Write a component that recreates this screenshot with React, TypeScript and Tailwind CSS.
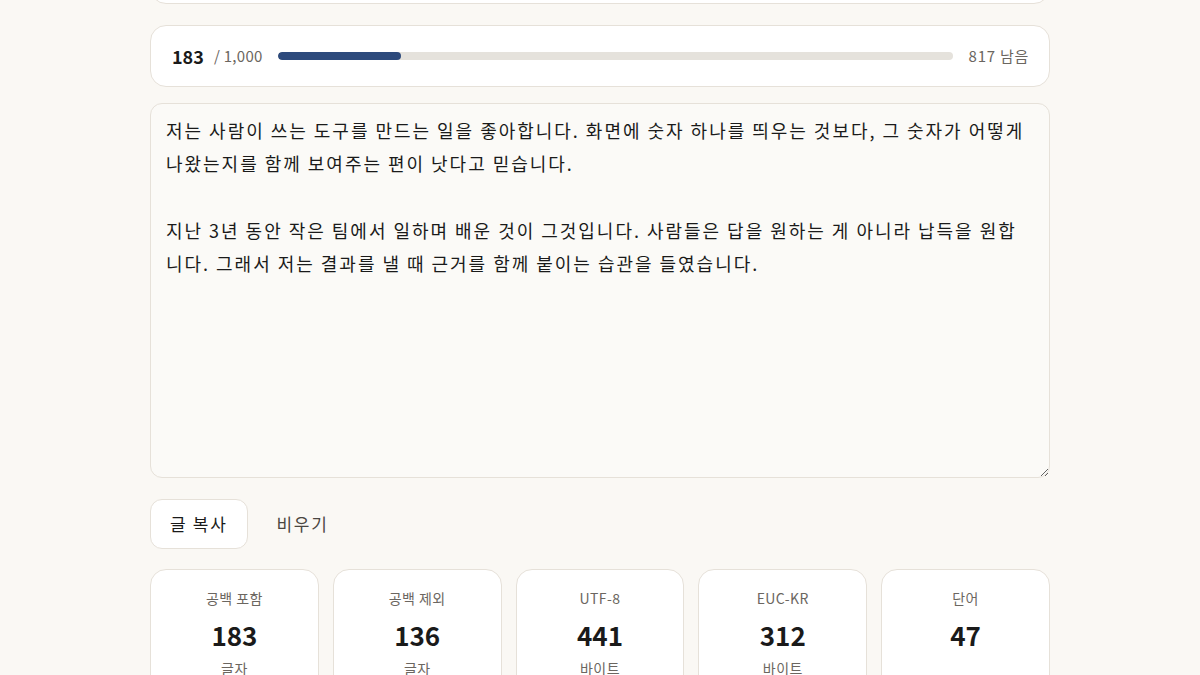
import { useState } from "react";

const FONT = { fontFamily: '"Noto Sans CJK KR", "Noto Sans", sans-serif' };

const INITIAL =
  "저는 사람이 쓰는 도구를 만드는 일을 좋아합니다. 화면에 숫자 하나를 띄우는 것보다, 그 숫자가 어떻게 나왔는지를 함께 보여주는 편이 낫다고 믿습니다.\n\n지난 3년 동안 작은 팀에서 일하며 배운 것이 그것입니다. 사람들은 답을 원하는 게 아니라 납득을 원합니다. 그래서 저는 결과를 낼 때 근거를 함께 붙이는 습관을 들였습니다.";

const LIMIT = 1000;

function StatCard({ label, value, unit }: { label: string; value: number; unit?: string }) {
  return (
    <div className="flex flex-col items-center rounded-2xl border border-[#e6e1d9] bg-white pt-[18px] pb-6">
      <div className="text-[14px] leading-5 tracking-[0.03em] text-[#6b6660]">{label}</div>
      <div className="mt-[11px] text-[26px] font-bold leading-8 text-[#1a1a1a]">{value}</div>
      <div className="mt-[7px] h-5 text-[14px] leading-5 tracking-[0.03em] text-[#6b6660]">{unit}</div>
    </div>
  );
}

export default function App() {
  const [text, setText] = useState(INITIAL);
  const count = 183;
  const pct = (count / LIMIT) * 100;

  return (
    <div className="min-h-screen overflow-hidden bg-[#faf8f4]" style={FONT}>
      <div className="mx-auto w-[900px]">
        {/* 스크롤된 위쪽 카드의 아랫부분 */}
        <div className="-mt-[60px] h-[64px] rounded-2xl border border-[#e6e1d9] bg-white" />

        {/* 글자 수 진행 막대 */}
        <div className="mt-[21px] flex h-[62px] items-center rounded-2xl border border-[#e6e1d9] bg-white pl-[21px] pr-[20px]">
          <span className="text-[18px] font-bold text-[#1a1a1a]">{count}</span>
          <span className="ml-[10px] text-[15px] tracking-[0.02em] text-[#6b6660]">/ 1,000</span>
          <div className="ml-[15px] h-[8px] flex-1 overflow-hidden rounded-full bg-[#e5e2dc]">
            <div className="h-full rounded-full bg-[#2d4a7c]" style={{ width: `${pct}%` }} />
          </div>
          <span className="ml-[16px] text-[15px] tracking-[0.05em] text-[#6b6660]">817 남음</span>
        </div>

        <textarea
          value={text}
          onChange={(e) => setText(e.target.value)}
          className="mt-[16px] block h-[375px] w-full resize-y rounded-xl border border-[#e6e1d9] bg-[#fbfaf7] px-[15px] py-[10px] text-[18px] leading-[33.3px] tracking-[0.11em] text-[#1a1a1a] outline-none"
          style={FONT}
        />

        <div className="mt-[21px] flex items-center gap-[8px]">
          <button className="h-[50px] rounded-xl border border-[#e6e1d9] bg-white px-[19px] text-[17px] tracking-[0.1em] text-[#1a1a1a]">
            글 복사
          </button>
          <button className="h-[50px] px-[21px] text-[17px] tracking-[0.1em] text-[#4a4641]">비우기</button>
        </div>

        <div className="mt-[20px] grid grid-cols-5 gap-[14px]">
          <StatCard label="공백 포함" value={183} unit="글자" />
          <StatCard label="공백 제외" value={136} unit="글자" />
          <StatCard label="UTF-8" value={441} unit="바이트" />
          <StatCard label="EUC-KR" value={312} unit="바이트" />
          <StatCard label="단어" value={47} />
        </div>
      </div>
    </div>
  );
}
